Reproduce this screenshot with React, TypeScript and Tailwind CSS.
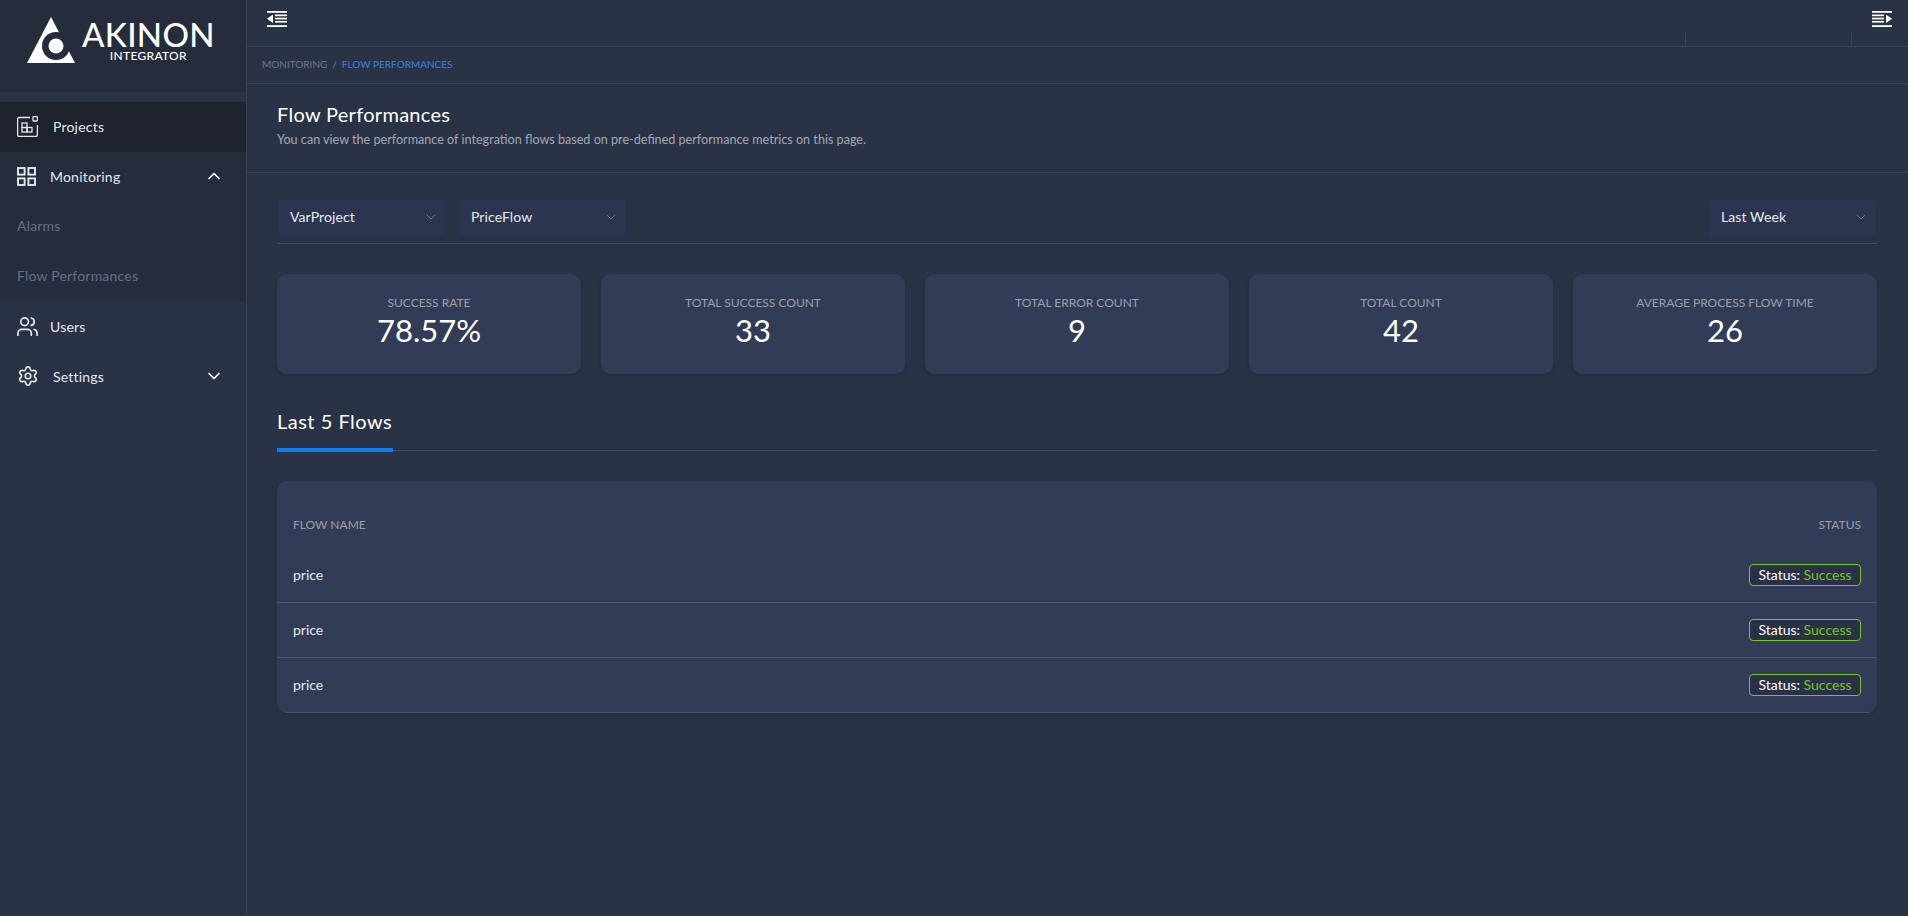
import { ChevronDown, ChevronUp, Settings, Users } from 'lucide-react'

const stats = [
  { label: 'SUCCESS RATE', value: '78.57%' },
  { label: 'TOTAL SUCCESS COUNT', value: '33' },
  { label: 'TOTAL ERROR COUNT', value: '9' },
  { label: 'TOTAL COUNT', value: '42' },
  { label: 'AVERAGE PROCESS FLOW TIME', value: '26' },
]

function Logo() {
  return (
    <div className="flex h-[92px] shrink-0 bg-[#252d3c] pl-[27px] pt-[17px]">
      <svg width="48" height="46" viewBox="0 0 48 46" className="shrink-0">
        <path d="M24 0 L0 46 L48 46 Z" fill="#fff" />
        <circle cx="29" cy="29" r="14" fill="#252d3c" />
        <circle cx="29" cy="29" r="7.5" fill="#fff" />
      </svg>
      <div className="ml-[7px] flex flex-col items-center">
        <span className="mt-[4px] text-[33px] leading-[26px] font-medium tracking-[0.3px] text-white">AKINON</span>
        <span className="mt-[2px] text-[12px] leading-[14px] font-medium tracking-[0.3px] text-white">INTEGRATOR</span>
      </div>
    </div>
  )
}

function Sidebar() {
  return (
    <aside className="flex w-[247px] shrink-0 flex-col border-r border-[#384052] bg-[#2a3245] text-[14px] tracking-[0.2px]">
      <Logo />
      <div className="h-[10px] shrink-0" />
      <div className="flex h-[50px] items-center bg-[#1e232e] pb-[2px] pl-[17px] text-[#e6e8ec]">
        <svg width="21" height="21" viewBox="0 0 21 21" fill="none" stroke="currentColor" strokeWidth="1.3">
          <path d="M13 1.5 H2 Q0.6 1.5 0.6 3 V19 Q0.6 20.4 2 20.4 H19 Q20.4 20.4 20.4 19 V9" />
          <rect x="16" y="0.6" width="4.4" height="4.4" rx="0.6" />
          <rect x="5" y="7" width="5" height="4.5" />
          <rect x="5" y="11.5" width="5" height="4.5" />
          <rect x="10" y="11.5" width="5" height="4.5" />
        </svg>
        <span className="ml-[15px]">Projects</span>
      </div>
      <div className="flex h-[50px] items-center bg-[#252d3c] pb-[2px] pl-[17px] pr-[22px] text-[#e6e8ec]">
        <svg width="19" height="19" viewBox="0 0 19 19" fill="none" stroke="currentColor" strokeWidth="1.9">
          <rect x="1" y="1" width="6.6" height="6.6" />
          <rect x="11.4" y="1" width="6.6" height="6.6" />
          <rect x="1" y="11.4" width="6.6" height="6.6" />
          <rect x="11.4" y="11.4" width="6.6" height="6.6" />
        </svg>
        <span className="ml-[14px] flex-1">Monitoring</span>
        <ChevronUp size={20} strokeWidth={2} className="text-white" />
      </div>
      <div className="bg-[#252d3c] text-[#667085]">
        <div className="flex h-[50px] items-center pb-[3px] pl-[17px]">Alarms</div>
        <div className="flex h-[50px] items-center pb-[3px] pl-[17px]">Flow Performances</div>
      </div>
      <div className="flex h-[50px] items-center pb-[2px] pl-[17px] pr-[22px] text-[#e6e8ec]">
        <Users size={23} strokeWidth={1.8} className="-ml-px" />
        <span className="ml-[11px] flex-1">Users</span>
      </div>
      <div className="flex h-[50px] items-center pb-[2px] pl-[17px] pr-[22px] text-[#e6e8ec]">
        <Settings size={22} strokeWidth={1.8} />
        <span className="ml-[14px] flex-1">Settings</span>
        <ChevronDown size={20} strokeWidth={2} className="text-white" />
      </div>
    </aside>
  )
}

function MenuToggle({ flip }: { flip?: boolean }) {
  return (
    <svg width="20" height="16" viewBox="0 0 20 16" fill="#fff" className={flip ? '-scale-x-100' : ''}>
      <rect x="0" y="0" width="20" height="1.8" />
      <rect x="8" y="3.5" width="12" height="1.7" />
      <rect x="8" y="6.7" width="12" height="1.7" />
      <rect x="8" y="9.9" width="12" height="1.7" />
      <rect x="0" y="14.2" width="20" height="1.8" />
      <path d="M6 3.5 V12 L0 7.7 Z" />
    </svg>
  )
}

function Select({ label, width }: { label: string; width: string }) {
  return (
    <div className={`flex h-[38px] items-center justify-between rounded-[4px] border border-[#283049] bg-[#2c3550] pb-[3px] pl-[12px] pr-[7px] text-[14px] tracking-[0.1px] text-[#e8eaee] ${width}`}>
      <span>{label}</span>
      <ChevronDown size={16} strokeWidth={1} className="text-[#9aa1ae]" />
    </div>
  )
}

function StatCard({ label, value }: { label: string; value: string }) {
  return (
    <div className="flex h-[100px] w-[304px] flex-col items-center rounded-[10px] bg-[#323c57] pt-[20px] shadow-[0_2px_4px_rgba(0,0,0,0.12)]">
      <span className="text-[12px] leading-[17px] text-[#9c9fa8]">{label}</span>
      <span className="text-[31px] leading-[38px] text-white">{value}</span>
    </div>
  )
}

function FlowRow() {
  return (
    <div className="flex h-[55px] items-center justify-between border-b border-[#4d566c] px-[16px] text-[14px] text-[#e8eaee]">
      <span className="pb-[2px]">price</span>
      <span className="mb-[1px] flex h-[22px] w-[112px] items-center justify-center rounded-[4px] border border-[#73c919] bg-[#2a3147] pb-[1px] text-[14px] text-white">
        Status:&nbsp;<span className="text-[#73c919]">Success</span>
      </span>
    </div>
  )
}

export default function App() {
  return (
    <div className="flex h-[916px] w-[1908px] overflow-hidden bg-[#2a3245] font-['Lato',sans-serif]">
      <Sidebar />
      <main className="flex flex-1 flex-col">
        <div className="flex h-[47px] items-start justify-between border-b border-[#3a4254] pl-[20px] pr-[16px] pt-[11px]">
          <MenuToggle />
          <div className="flex h-[35px] items-start">
            <div className="mr-[20px] mt-[21px] h-[14px] w-[167px] border-x border-[#3a4254]" />
            <MenuToggle flip />
          </div>
        </div>
        <div className="flex h-[37px] items-center border-b border-[#3a4254] pb-[1px] pl-[15px] text-[10px] text-[#6f7888]">
          <span>MONITORING</span>
          <span className="mx-[5px]">/</span>
          <span className="text-[#3b82e6]">FLOW PERFORMANCES</span>
        </div>
        <div className="h-[89px] border-b border-[#3a4254] pl-[30px] pt-[17px]">
          <h1 className="text-[20px] leading-[26px] tracking-[0.3px] text-white">Flow Performances</h1>
          <p className="mt-[4px] text-[12.6px] leading-[18px] text-[#a3a8b2]">
            You can view the performance of integration flows based on pre-defined performance metrics on this page.
          </p>
        </div>
        <div className="pl-[30px] pr-[31px]">
          <div className="mt-[26px] flex h-[45px] items-start justify-between border-b border-[#414a5e]">
            <div className="flex gap-[11px]">
              <Select label="VarProject" width="w-[170px]" />
              <Select label="PriceFlow" width="w-[169px]" />
            </div>
            <Select label="Last Week" width="w-[169px]" />
          </div>
          <div className="mt-[30px] flex justify-between">
            {stats.map((s) => (
              <StatCard key={s.label} label={s.label} value={s.value} />
            ))}
          </div>
          <div className="mt-[34px] h-[43px] border-b border-[#414a5e]">
            <span className="inline-block h-[44px] w-[116px] border-b-4 border-[#0a7df5] text-[20px] leading-[26px] tracking-[0.5px] text-white">
              Last 5 Flows
            </span>
          </div>
          <div className="mt-[30px] overflow-hidden rounded-[10px] bg-[#323c57] shadow-[0_2px_4px_rgba(0,0,0,0.1)]">
            <div className="flex h-[67px] items-end justify-between px-[16px] pb-[14px] text-[12px] text-[#9c9fa8]">
              <span>FLOW NAME</span>
              <span>STATUS</span>
            </div>
            <FlowRow />
            <FlowRow />
            <FlowRow />
          </div>
        </div>
      </main>
    </div>
  )
}
